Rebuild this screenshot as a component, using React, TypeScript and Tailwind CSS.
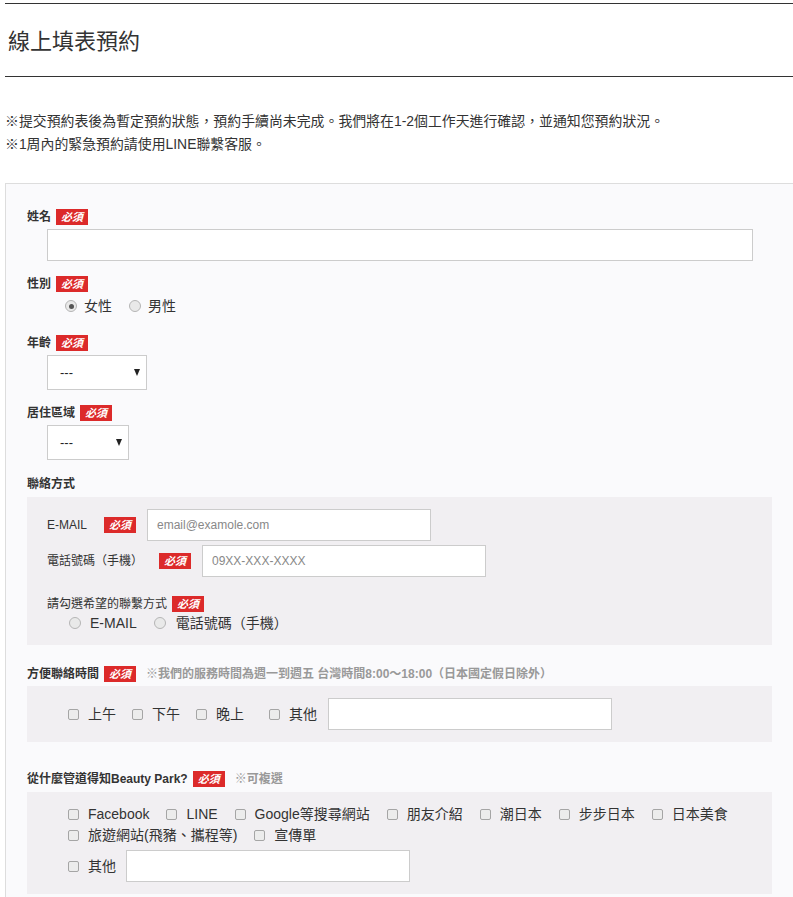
import React from "react";

const Badge = ({ className = "" }: { className?: string }) => (
  <span
    className={`inline-flex h-4 w-8 shrink-0 items-center justify-center bg-[#dc2a2a] text-[11px] font-bold italic leading-4 text-white ${className}`}
  >
    必須
  </span>
);

const Label = ({
  text,
  badge = true,
  note,
  className = "",
}: {
  text: string;
  badge?: boolean;
  note?: string;
  className?: string;
}) => (
  <div className={`flex h-4 items-center text-[12px] font-bold text-[#333] ${className}`}>
    <span>{text}</span>
    {badge && <Badge className="ml-[5px]" />}
    {note && <span className="ml-[10px] text-[#999]">{note}</span>}
  </div>
);

const Radio = ({
  label,
  checked = false,
  gap = "ml-[7px]",
}: {
  label: string;
  checked?: boolean;
  gap?: string;
}) => (
  <label className="flex items-center">
    <span className="flex h-3 w-3 items-center justify-center rounded-full border border-[#b5b5b5] bg-[#e9e9e9]">
      {checked && <span className="h-[5px] w-[5px] rounded-full bg-[#555]" />}
    </span>
    <span className={`${gap} text-[14px] text-[#333]`}>{label}</span>
  </label>
);

const Check = ({ label }: { label: string }) => (
  <label className="flex items-center">
    <span className="h-[11px] w-[11px] rounded-[2px] border border-[#a5a5a5] bg-[#ececec]" />
    <span className="ml-[9px] text-[14px] text-[#333]">{label}</span>
  </label>
);

const TextInput = ({
  placeholder = "",
  className = "",
}: {
  placeholder?: string;
  className?: string;
}) => (
  <div
    className={`flex h-8 items-center border border-[#cccccc] bg-white px-[9px] text-[12px] text-[#888] ${className}`}
  >
    {placeholder}
  </div>
);

const Select = ({ className = "" }: { className?: string }) => (
  <div
    className={`ml-5 mt-1 flex h-[35px] items-center justify-between border border-[#cccccc] bg-white pl-[12px] pr-[6px] text-[13px] text-[#222] ${className}`}
  >
    <span>---</span>
    <span className="h-0 w-0 border-x-[3.5px] border-t-[7px] border-x-transparent border-t-[#222]" />
  </div>
);

export default function App() {
  return (
    <div className="w-full overflow-hidden bg-white font-['Liberation_Sans','Noto_Sans_CJK_TC',sans-serif] text-[#333]">
      <div className="ml-[5px] w-[789px] pb-10">
        <h1 className="mt-[3px] border-y border-[#333] pb-[18px] pl-[3px] pt-[22px] text-[22px] font-normal leading-[32px] text-[#333]">
          線上填表預約
        </h1>

        <div className="mt-[33px] text-[13.9px] leading-[23px] text-[#333]">
          <p>※提交預約表後為暫定預約狀態，預約手續尚未完成。我們將在1-2個工作天進行確認，並通知您預約狀況。</p>
          <p>※1周內的緊急預約請使用LINE聯繫客服。</p>
        </div>

        <div className="mt-[27px] border border-[#dddddd] bg-[#fafafc] px-[21px] pb-6 pt-[25px]">
          {/* 姓名 */}
          <Label text="姓名" />
          <TextInput className="ml-5 mt-1 w-[706px]" />

          {/* 性別 */}
          <Label text="性別" className="mt-[15px]" />
          <div className="ml-[38px] mt-1 flex h-5 items-center gap-[17px]">
            <Radio label="女性" checked />
            <Radio label="男性" />
          </div>

          {/* 年齡 */}
          <Label text="年齡" className="mt-[19px]" />
          <Select className="w-[100px]" />

          {/* 居住區域 */}
          <Label text="居住區域" className="mt-[15px]" />
          <Select className="w-[82px]" />

          {/* 聯絡方式 */}
          <Label text="聯絡方式" badge={false} className="mt-4" />
          <div className="mt-[5px] bg-[#f1eff2] pb-3 pl-5 pt-3">
            <div className="flex items-center">
              <span className="text-[12px] text-[#333]">E-MAIL</span>
              <Badge className="ml-[17px]" />
              <TextInput placeholder="email@examole.com" className="ml-[11px] w-[284px]" />
            </div>
            <div className="mt-1 flex items-center">
              <span className="text-[12px] text-[#333]">電話號碼（手機）</span>
              <Badge className="ml-[16px]" />
              <TextInput placeholder="09XX-XXX-XXXX" className="ml-[11px] w-[284px]" />
            </div>
            <div className="mt-[19px] flex h-4 items-center text-[12px] text-[#333]">
              <span>請勾選希望的聯繫方式</span>
              <Badge className="ml-[5px]" />
            </div>
            <div className="ml-[22px] mt-[1px] flex h-5 items-center gap-[17px]">
              <Radio label="E-MAIL" gap="ml-[9px]" />
              <Radio label="電話號碼（手機）" gap="ml-[10px]" />
            </div>
          </div>

          {/* 方便聯絡時間 */}
          <Label
            text="方便聯絡時間"
            note="※我們的服務時間為週一到週五 台灣時間8:00～18:00（日本國定假日除外）"
            className="mt-[21px]"
          />
          <div className="mt-1 flex items-center bg-[#f1eff2] py-3 pl-[41px]">
            <div className="flex items-center gap-[16px]">
              <Check label="上午" />
              <Check label="下午" />
              <Check label="晚上" />
            </div>
            <div className="ml-[25px] flex items-center">
              <Check label="其他" />
              <TextInput className="ml-[11px] w-[284px]" />
            </div>
          </div>

          {/* 從什麼管道 */}
          <Label
            text="從什麼管道得知Beauty Park?"
            note="※可複選"
            className="mt-[29px]"
          />
          <div className="mt-[5px] bg-[#f1eff2] pb-3 pl-[41px] pr-8 pt-[12px]">
            <div className="flex flex-wrap gap-x-[17px] leading-[21px]">
              {[
                "Facebook",
                "LINE",
                "Google等搜尋網站",
                "朋友介紹",
                "潮日本",
                "步步日本",
                "日本美食",
                "旅遊網站(飛豬、攜程等)",
                "宣傳單",
              ].map((t) => (
                <div key={t} className="flex h-[21px] items-center">
                  <Check label={t} />
                </div>
              ))}
            </div>
            <div className="mt-1 flex items-center">
              <Check label="其他" />
              <TextInput className="ml-[10px] w-[284px]" />
            </div>
          </div>
        </div>
      </div>
    </div>
  );
}
